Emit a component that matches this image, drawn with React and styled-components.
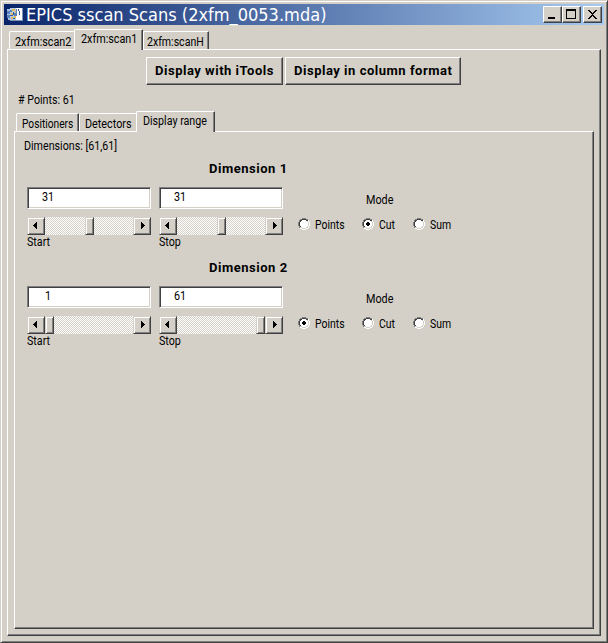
import React, { useState } from 'react';
import styled, { createGlobalStyle, css } from 'styled-components';

const face = '#d4d0c8';
const shade = '#808080';
const dark = '#404040';

const GlobalStyle = createGlobalStyle`
  * { box-sizing: border-box; }
  body { margin: 0; overflow: hidden; background: ${face}; color: #000; font: 12px/14px Roboto, "Liberation Sans", sans-serif; }
  button, input { font: inherit; color: inherit; margin: 0; }
`;

const raised = css`
  background: ${face};
  border: 1px solid;
  border-color: #fff ${dark} ${dark} #fff;
  box-shadow: inset -1px -1px ${shade};
`;

const Window = styled.div`
  width: 608px;
  height: 643px;
  padding: 3px 2px 0 3px;
  border: 1px solid;
  border-color: ${face} ${dark} ${dark} ${face};
  box-shadow: inset 1px 1px #fff, inset -1px -1px ${shade};
`;

const TitleBar = styled.header`
  display: flex;
  align-items: center;
  width: 600px;
  height: 21px;
  padding-left: 2px;
  background: linear-gradient(90deg, #0a246a, #a6caf0);
`;

const Title = styled.h1`
  margin: 0 0 0 2px;
  flex: 1;
  font: 17px/20px "DejaVu Sans", sans-serif;
  white-space: nowrap;
  color: #fff;
  transform: scaleX(${p => p.$scale});
  transform-origin: left;
`;

const WindowButton = styled.button`
  ${raised}
  width: 19px;
  height: 17px;
  padding: 0;
  margin-left: ${p => p.$gap || 0}px;
  svg { display: block; }
`;

const WindowButtons = styled.div`
  display: flex;
  padding-right: 2px;
`;

const Label = styled.span`
  display: block;
  width: max-content;
  white-space: pre;
  font-size: 12px;
  line-height: 14px;
  transform: scaleX(${p => p.$scale || 0.9});
  transform-origin: left;
`;

const BoldLabel = styled.span`
  display: block;
  white-space: pre;
  font-weight: 700;
  font-size: 13px;
  line-height: 14px;
  letter-spacing: 0.52px;
`;

const TabStrip = styled.nav`
  display: flex;
  align-items: flex-end;
  padding-left: 2px;
  height: 20px;
`;

const Tab = styled.button`
  position: relative;
  width: ${p => p.$width}px;
  height: ${p => (p.$active ? 21 : 18)}px;
  margin-bottom: ${p => (p.$active ? -1 : 0)}px;
  padding: ${p => (p.$active ? 2 : 3)}px 0 0 ${p => p.$pad}px;
  display: flex;
  align-items: flex-start;
  background: ${face};
  border: solid #fff;
  border-width: 1px ${p => (p.$flat ? 0 : 1)}px 0 1px;
  border-right-color: ${dark};
  border-radius: 2px 1px 0 0;
  box-shadow: ${p => (p.$flat ? 'none' : `inset -1px 0 ${shade}`)};
`;

const OuterTabs = styled.div`
  width: 594px;
  margin: 4px 0 0 3px;
`;

const OuterPanel = styled.main`
  ${raised}
  height: 587px;
  padding: 7px 6px 0;
`;

const Actions = styled.div`
  display: flex;
  gap: 2px;
  padding-left: 132px;
`;

const ActionButton = styled.button`
  ${raised}
  display: flex;
  width: ${p => p.$width}px;
  height: 28px;
  padding: 6px 0 0 8px;
`;

const PointCount = styled.div`
  padding: 8px 0 0 4px;
  height: 26px;
`;

const InnerPanel = styled.section`
  ${raised}
  width: 580px;
  height: 498px;
  padding: 7px 0 0 9px;
`;

const DimensionList = styled.div`
  padding-top: 8px;
`;

const DimensionGroup = styled.section`
  height: 99px;
`;

const GroupTitle = styled.div`
  height: 26px;
  padding: 1px 0 0 185px;
`;

const Controls = styled.div`
  display: flex;
  padding-left: 3px;
`;

const Range = styled.div`
  width: 124px;
  margin-right: 8px;
`;

const Field = styled.div`
  height: 22px;
  padding: 2px 0 0 ${p => p.$indent}px;
  background: #fff;
  border: 1px solid;
  border-color: ${shade} #fff #fff ${shade};
  box-shadow: inset 1px 1px ${dark}, inset -1px -1px ${face};
`;

const Scrollbar = styled.div`
  display: flex;
  height: 18px;
  margin: 8px 0 0;
  background: repeating-conic-gradient(#fff 0 25%, ${face} 0 50%) 0 0 / 2px 2px;
`;

const scrollPart = css`
  height: 18px;
  background: ${face};
  border: 1px solid;
  border-color: ${face} ${dark} ${dark} ${face};
  box-shadow: inset 1px 1px #fff, inset -1px -1px ${shade};
`;

const Arrow = styled.button`
  ${scrollPart}
  width: 18px;
  padding: 0;
  svg { display: block; }
`;

const Track = styled.div`
  flex: 1;
`;

const Thumb = styled.div`
  ${scrollPart}
  width: 9px;
  margin-left: ${p => p.$offset}px;
`;

const Mode = styled.div`
  width: 170px;
  padding: 6px 0 0 7px;
`;

const ModeTitle = styled.div`
  height: 25px;
  padding-left: 68px;
`;

const Options = styled.div`
  display: grid;
  grid-template-columns: 64px 51px 50px;
`;

const Option = styled.div`
  display: flex;
  gap: 5px;
  cursor: default;
  svg { flex: none; }
`;

function Radio({ checked }) {
  return (
    <svg width="12" height="12" viewBox="0 0 12 12" shapeRendering="crispEdges">
      <path fill="#fff" d="M4 2h4v1h2v1h1v4h-1v2h-2v1H4v-1H2V8H1V4h1V3h2z" />
      <path fill={shade} d="M4 0h4v1H4zM2 1h2v1H2zM8 1h2v1H8zM1 2h1v2H1zM0 4h1v4H0zM1 8h1v2H1z" />
      <path fill={dark} d="M4 1h4v1H4zM2 2h2v1H2zM8 2h2v1H8zM2 3h1v1H2zM1 4h1v4H1zM2 8h1v1H2z" />
      <path fill={face} d="M9 3h1v1H9zM10 4h1v4h-1zM9 8h1v1H9zM8 9h2v1H8zM4 10h4v1H4zM2 9h2v1H2z" />
      <path fill="#fff" d="M10 2h1v2h-1zM11 4h1v4h-1zM10 8h1v2h-1zM8 10h2v1H8zM4 11h4v1H4zM2 10h2v1H2z" />
      {checked && <path d="M5 4h2v1h1v2H7v1H5V7H4V5h1z" />}
    </svg>
  );
}

function Chevron({ right }) {
  return (
    <svg width="16" height="16" viewBox="0 0 16 16" shapeRendering="crispEdges">
      <path d={right
        ? 'M7 4h1v1h1v1h1v1h1v1h-1v1H9v1H8v1H7z'
        : 'M9 4H8v1H7v1H6v1H5v1h1v1h1v1h1v1h1z'} />
    </svg>
  );
}

function Slider({ caption, value, indent, offset }) {
  return (
    <Range>
      <Field $indent={indent}><Label>{value}</Label></Field>
      <Scrollbar>
        <Arrow aria-label="Decrease"><Chevron /></Arrow>
        <Track><Thumb $offset={offset} /></Track>
        <Arrow aria-label="Increase"><Chevron right /></Arrow>
      </Scrollbar>
      <Label $scale={0.89}>{caption}</Label>
    </Range>
  );
}

function Dimension({ number, start, stop, initialMode }) {
  const [mode, setMode] = useState(initialMode);
  return (
    <DimensionGroup>
      <GroupTitle><BoldLabel>Dimension {number}</BoldLabel></GroupTitle>
      <Controls>
        <Slider caption="Start" {...start} />
        <Slider caption="Stop" {...stop} />
        <Mode>
          <ModeTitle><Label>Mode</Label></ModeTitle>
          <Options>
            {['Points', 'Cut', 'Sum'].map(name => (
              <Option key={name} onClick={() => setMode(name)}>
                <Radio checked={mode === name} />
                <Label $scale={0.87}>{name}</Label>
              </Option>
            ))}
          </Options>
        </Mode>
      </Controls>
    </DimensionGroup>
  );
}

function WindowIcon() {
  return (
    <svg width="18" height="17" viewBox="0 0 18 17" shapeRendering="crispEdges">
      <path fill="#b9c9e3" d="M4 2h7v12H4z" />
      <path fill="#fff" d="M10 2h6v12h-6z" />
      <path fill="#5d83bd" d="M1 5h3v3H1zM1 9h3v3H1zM4 4h2v2H4zM8 7h2v3H8zM10 3h1v7h-1z" />
      <path fill="#a8bfe0" d="M1 3h3v2H1zM1 8h3v1H1zM2 12h3v2H2z" />
      <path fill="#e0b957" d="M6 3h3v2H6zM9 5h1v2H9zM5 7h2v2H5zM8 10h2v2H8zM5 11h2v2H5z" />
      <path fill="#315ba0" d="M7 6h1v3H7zM4 9h3v1H4zM7 12h2v1H7zM12 3h1v2h-1zM13 5h1v4h-1z" />
      <path fill="#7b93b8" d="M4 14h13v1H4zM16 2h1v13h-1z" />
    </svg>
  );
}

export default function App() {
  return (
    <>
      <GlobalStyle />
      <Window>
        <TitleBar>
          <WindowIcon />
          <Title $scale={0.954}>EPICS sscan Scans (2xfm_0053.mda)</Title>
          <WindowButtons>
            <WindowButton aria-label="Minimize">
              <svg width="17" height="15" shapeRendering="crispEdges"><path d="M4 10h7v2H4z" /></svg>
            </WindowButton>
            <WindowButton aria-label="Maximize">
              <svg width="17" height="15" shapeRendering="crispEdges"><path fillRule="evenodd" d="M3 2h10v10H3zM4 4v7h8V4z" /></svg>
            </WindowButton>
            <WindowButton aria-label="Close" $gap={2}>
              <svg width="17" height="15" shapeRendering="crispEdges">
                <path d="M4 3h2v1h1v1h1v1h1V5h1V4h1V3h2v1h-1v1h-1v1h-1v1H9v1h1v1h1v1h1v1h1v1h-2v-1h-1v-1H9V9H8v1H7v1H6v1H4v-1h1v-1h1V9h1V8h1V7H7V6H6V5H5V4H4z" />
              </svg>
            </WindowButton>
          </WindowButtons>
        </TitleBar>
        <OuterTabs>
          <TabStrip>
            <Tab $width={65} $pad={5} $flat><Label>2xfm:scan2</Label></Tab>
            <Tab $width={69} $pad={6} $active><Label>2xfm:scan1</Label></Tab>
            <Tab $width={66} $pad={3}><Label $scale={0.88}>2xfm:scanH</Label></Tab>
          </TabStrip>
          <OuterPanel>
            <Actions>
              <ActionButton $width={137}><BoldLabel>Display with iTools</BoldLabel></ActionButton>
              <ActionButton $width={176}><BoldLabel>Display in column format</BoldLabel></ActionButton>
            </Actions>
            <PointCount><Label $scale={0.89}># Points: 61</Label></PointCount>
            <TabStrip>
              <Tab $width={63} $pad={5}><Label $scale={0.85}>Positioners</Label></Tab>
              <Tab $width={57} $pad={5} $flat><Label>Detectors</Label></Tab>
              <Tab $width={79} $pad={6} $active><Label $scale={0.89}>Display range</Label></Tab>
            </TabStrip>
            <InnerPanel>
              <Label $scale={0.89}>Dimensions: [61,61]</Label>
              <DimensionList>
                <Dimension
                  number={1}
                  initialMode="Cut"
                  start={{ value: '31', indent: 14, offset: 40 }}
                  stop={{ value: '31', indent: 14, offset: 40 }}
                />
                <Dimension
                  number={2}
                  initialMode="Points"
                  start={{ value: '1', indent: 17, offset: 0 }}
                  stop={{ value: '61', indent: 14, offset: 79 }}
                />
              </DimensionList>
            </InnerPanel>
          </OuterPanel>
        </OuterTabs>
      </Window>
    </>
  );
}
